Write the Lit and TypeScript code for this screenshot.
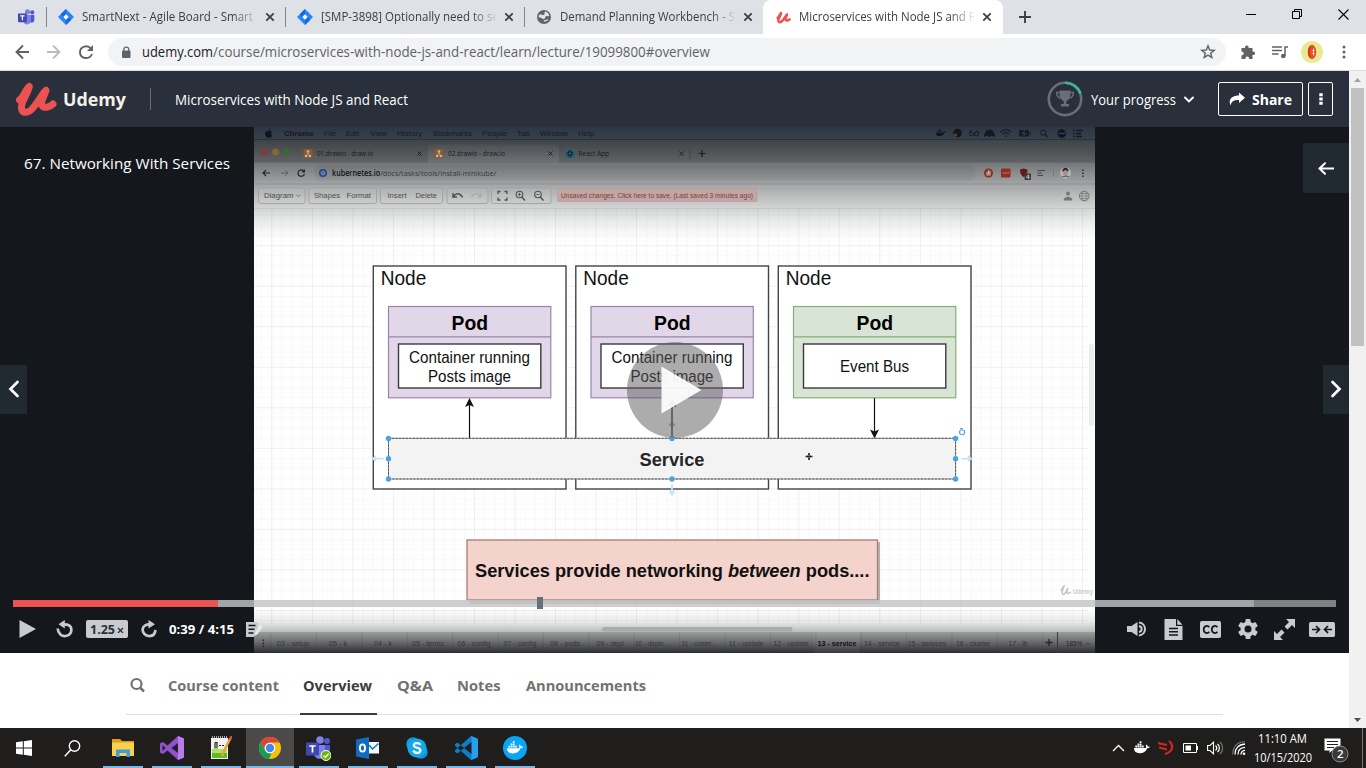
import { LitElement, html, svg, css } from "lit";
import { customElement } from "lit/decorators.js";

type Opt = { size?: number; weight?: number; color?: string; font?: string; opacity?: number };

const UI = "'Open Sans','Noto Sans',sans-serif";
const ARIAL = "'Liberation Sans',Arial,sans-serif";

/* One line of text set to an exact advance width, usable inside flex rows. */
const label = (text: string, width: number, o: Opt = {}, cls = "") => {
  const size = o.size ?? 12;
  return html`<svg class="label ${cls}" width=${width} height=${size * 1.6} viewBox="0 0 ${width} ${size * 1.6}">
    <text x="0" y=${size * 1.16} textLength=${width} lengthAdjust="spacingAndGlyphs" font-family=${o.font ?? UI}
      font-size=${size} font-weight=${o.weight ?? 400} fill=${o.color ?? "#3c4043"}>${text}</text></svg>`;
};

const icon = (w: number, h: number, body: unknown, vb = `0 0 ${w} ${h}`, cls = "") =>
  html`<svg class="ic ${cls}" width=${w} height=${h} viewBox=${vb} fill="none">${body}</svg>`;

/* Text on the video canvas. */
const vt = (x: number, y: number, text: string, w: number, o: Opt = {}) =>
  svg`<text x=${x} y=${y} textLength=${w} lengthAdjust="spacingAndGlyphs" font-family=${o.font ?? ARIAL}
    font-size=${o.size ?? 8} font-weight=${o.weight ?? 400} fill=${o.color ?? "#000"} opacity=${o.opacity ?? 1}>${text}</text>`;

const udemyU = (w: number, h: number) => icon(w, h, svg`
  <path d="M19.500 100C24 97 25.500 89.500 29.300 86.500C28 94 20.500 102 21.500 108.500C22.500 114 28.500 113 32.500 108.500C38.500 102 42.500 93 46 90.300C45 95 40 101.500 42 105.500C44 108.500 49.500 107.500 53 104" stroke="#ec5252" stroke-width="7" stroke-linecap="round" stroke-linejoin="round"/>`, "15 81 42 36");

const jira = icon(16, 16, svg`<path d="M8 0L16 8L8 16L0 8Z" fill="#2684ff"/><path d="M8 0L8 5.400L5.400 8L2.700 5.300Z" fill="#1868db"/><path d="M8 16L8 10.600L10.600 8L13.300 10.700Z" fill="#1868db"/><path d="M8 5.300L10.700 8L8 10.700L5.300 8Z" fill="#fff"/>`);
const globe = icon(16, 16, svg`<circle cx="8" cy="8" r="7" fill="#5f6368"/><path d="M3 6C5 4 6 6.500 7.500 6C9.500 5.400 8 4 9 2.600C11.500 3 13 5 13.300 7C12 8 11 6.500 9.800 7.400C8.500 8.500 9.500 9.500 8 10C6 10.500 5 8 2.400 8.400Z" fill="#dee1e6"/><path d="M8 12.500C9 11 11 12 12 10.500" stroke="#dee1e6" stroke-width="1.300"/>`);
const teams = (s: number, check = false) => icon(s, s, svg`
  <circle cx="21" cy="5" r="3" fill="#5059c9"/><circle cx="14" cy="4" r="3.800" fill="#7b83eb"/>
  <path d="M17 9H24V16C24 20 20 21 17 19Z" fill="#5059c9"/><path d="M8 9H19V17C19 24 9 25 8 18Z" fill="#7b83eb"/>
  <rect x="0" y="6.500" width="13" height="13" rx="1" fill="#4049ae"/><path d="M3.300 10H9.700M6.500 10V16.600" stroke="#fff" stroke-width="1.700"/>
  ${check ? svg`<circle cx="20" cy="19.500" r="5" fill="#6bb700" stroke="#fff" stroke-width="1"/><path d="M17.500 19.500L19.400 21.300L22.600 17.800" stroke="#fff" stroke-width="1.300"/>` : ""}`, "0 0 25 25");
const closeX = icon(10, 10, svg`<path d="M1.300 1.300L8.700 8.700M8.700 1.300L1.300 8.700" stroke="#3c4043" stroke-width="1.800"/>`);
const whale = (s: number, c: string) => svg`<g transform="scale(${s})" fill=${c}><path d="M0 8H13.500C14 6.500 13.700 5.500 13.200 4.800L14 4C15 4.600 15.400 5.400 15.500 6.200C16.400 6 17.300 6.200 18 6.500C17.500 7.800 16.300 8.100 15 8.100C13.600 12 10.500 13.800 6.500 13.800C2 13.800 0 11.500 0 8Z"/><path d="M1.500 5.200H3.500V7.300H1.500ZM4 5.200H6V7.300H4ZM6.500 5.200H8.500V7.300H6.500ZM9 5.200H11V7.300H9ZM4 2.700H6V4.700H4ZM6.500 2.700H8.500V4.700H6.500ZM6.500 .3H8.500V2.300H6.500Z"/></g>`;

const range = (n: number) => Array.from({ length: n }, (_, i) => i);

@customElement("video-frame")
class VideoFrame extends LitElement {
  static styles = css`:host{display:block;width:841px;height:526px}svg{display:block}`;

  grid() {
    const xs = range(82).map((i) => 261.7 + i * 10.133);
    const ys = range(41).map((i) => 215.3 + i * 10.133);
    return svg`${xs.map((x, i) => svg`<path d="M${x} 209V624" stroke="#000" stroke-opacity=${i % 4 === 1 ? 0.06 : 0.022}/>`)}
      ${ys.map((y, i) => svg`<path d="M254 ${y}H1088" stroke="#000" stroke-opacity=${i % 4 === 3 ? 0.06 : 0.022}/>`)}`;
  }

  node(x: number) {
    return svg`<rect x=${x} y="266" width="192.700" height="223" fill="#fff" stroke="#444" stroke-width="1.400"/>
      ${vt(x + 7.5, 284.5, "Node", 45.5, { size: 19.5, color: "#111" })}`;
  }

  pod(x: number, fill: string, edge: string, lines: [string, number][]) {
    return svg`<rect x=${x} y="306.500" width="162.300" height="91.300" fill=${fill} stroke=${edge} stroke-width="1.200"/>
      <path d="M${x} 336.800H${x + 162.3}" stroke=${edge} stroke-width="1.200"/>
      <rect x=${x + 10} y="344" width="142.300" height="44" fill="#fff" stroke="#3a3a3a" stroke-width="1.400"/>
      ${vt(x + 63, 330, "Pod", 36.5, { size: 20, weight: 700 })}
      ${lines.map(([s, w], i) => vt(x + 81 - w / 2, (lines.length > 1 ? 363.3 : 372.3) + i * 18.2, s, w, { size: 15.6, color: "#111" }))}`;
  }

  render() {
    const dot = (x: number, y: number) => svg`<circle cx=${x} cy=${y} r="2.700" fill="#4ba4de"/>`;
    const menu: [string, number, number][] = [["File", 324, 12], ["Edit", 346, 13], ["View", 370, 17], ["History", 397, 25], ["Bookmarks", 433, 39], ["People", 482, 25], ["Tab", 517, 13], ["Window", 540, 28], ["Help", 578, 16]];
    const sheets: [string, number, number][] = [["03 - setup", 293, 32], ["05 - k", 338, 18], ["04 - k", 383, 18], ["05 - terms", 428, 32], ["06 - config", 474, 33], ["07 - config", 520, 33], ["08 - pods", 565, 30], ["09 - depl", 610, 27], ["10 - deplo..", 651, 32], ["11 - comm...", 699, 35], ["11 - update", 746, 35], ["12 - update", 791, 35], ["13 - service", 837, 39], ["14 - service", 882, 36], ["15 - serivces", 927, 38], ["16 - cluster", 973, 34], ["17 - lb", 1018, 19]];
    const purple = ["#e1d7e8", "#9b84ac"], green = ["#d8e5d6", "#86ae72"];
    const btn = (x: number, w: number) => svg`<rect x=${x} y="188" width=${w} height="15.500" rx="2" stroke="#a0a2a3" stroke-width=".9" fill="#fff" fill-opacity=".05"/>`;
    return html`<svg width="841" height="526" viewBox="254 127 841 526" fill="none">
      <defs>
        <linearGradient id="top" x1="0" y1="0" x2="0" y2="1">
          <stop offset="0" stop-color="#2e3642"/><stop offset=".11" stop-color="#37414c"/><stop offset=".111" stop-color="#3f4246"/>
          <stop offset=".31" stop-color="#5f6163"/><stop offset=".32" stop-color="#747779"/><stop offset=".5" stop-color="#a1a3a4"/>
          <stop offset=".7" stop-color="#cfd1d1"/><stop offset=".85" stop-color="#eceeed"/><stop offset="1" stop-color="#fefefe"/>
        </linearGradient>
        <linearGradient id="bot" x1="0" y1="0" x2="0" y2="1">
          <stop offset="0" stop-color="#fefefe"/><stop offset=".3" stop-color="#e6e7e7"/><stop offset=".52" stop-color="#bbbdbd"/>
          <stop offset=".53" stop-color="#999b9c"/><stop offset=".75" stop-color="#696b6e"/><stop offset="1" stop-color="#2d2d31"/>
        </linearGradient>
        <linearGradient id="act" x1="0" y1="0" x2="0" y2="1"><stop offset="0" stop-color="#4c4f53"/><stop offset="1" stop-color="#707376"/></linearGradient>
      </defs>
      <rect x="254" y="127" width="841" height="526" fill="#fefefe"/>
      <rect x="254" y="127" width="841" height="113" fill="url(#top)"/>
      <rect x="254" y="609" width="841" height="44" fill="url(#bot)"/>
      ${this.grid()}
      <rect x="254" y="139" width="841" height="1" fill="#24313f"/>
      <path d="M266 136.500C264 134 265.500 130.500 268 131.500C270 130.500 272 131.500 272 132C270.500 133 270.800 134.500 272.300 135.300C271.300 138 270 138 268.800 137.500C267.500 138 266.800 137.700 266 136.500ZM268.500 131C268.500 129.500 269.500 128.700 270.500 128.600C270.500 130 269.700 130.900 268.500 131Z" fill="#10151b"/>
      ${vt(284, 136, "Chrome", 29.5, { size: 8, weight: 700, color: "#12171e" })}
      ${menu.map(([s, x, w]) => vt(x, 136, s, w, { size: 8, color: "#151b23" }))}
      <g transform="translate(936 128.500)">${whale(0.55, "#12171d")}</g>
      <circle cx="957.500" cy="133" r="4.300" fill="#14171b"/><circle cx="955.500" cy="135" r="1.500" fill="#7c3a30"/>
      <circle cx="971.500" cy="134" r="2" stroke="#171c22"/><circle cx="976.500" cy="134" r="2" stroke="#171c22"/><path d="M969.500 133L971 130M978.500 133L977 130" stroke="#171c22"/>
      <path d="M984 137C984 127 995 127 995 137L991.500 135.500L989.500 137L987.500 135.500Z" fill="#14191f"/>
      <path d="M1000.500 132C1004 129 1008 129 1011 132M1002.500 134C1004.500 132.300 1007 132.300 1009 134" stroke="#171c22" stroke-width="1.200"/><circle cx="1005.800" cy="136" r="1" fill="#171c22"/>
      <rect x="1019" y="130" width="10" height="6.500" rx="1" fill="#171c22"/><rect x="1029.500" y="132" width="1.500" height="2.500" fill="#171c22"/><path d="M1024.500 130.500L1022.500 133.500H1025.500L1023.500 136" stroke="#414a55" stroke-width=".8"/>
      <circle cx="1043" cy="132.500" r="2.600" stroke="#171c22"/><path d="M1045 134.500L1047.500 137" stroke="#171c22" stroke-width="1.200"/>
      <circle cx="1061.700" cy="133.500" r="4.300" fill="#10151e"/><path d="M1058.500 134C1061 131 1062 136 1065 132.500" stroke="#3c5f8d"/>
      <path d="M1073 130.500H1074.500M1076 130.500H1083M1073 133.500H1074.500M1076 133.500H1081M1073 136.500H1074.500M1076 136.500H1082" stroke="#13181e" stroke-width="1.300"/>
      <path d="M428 163V148C428 145 430 144.500 432 144.500H555C558 144.500 559 146 559 148V163Z" fill="url(#act)"/>
      <circle cx="264.500" cy="152" r="3.500" fill="#803b36"/><circle cx="275.500" cy="152" r="3.500" fill="#85682f"/><circle cx="286.500" cy="152" r="3.500" fill="#346b35"/>
      ${[303.5, 434.5].map((x) => svg`<rect x=${x} y="149" width="9" height="9" rx="1" fill="#8f5a2b"/><path d="M${x + 4.5} 150.500V153L${x + 2.5} 156.500M${x + 4.500} 153L${x + 6.500} 156.500" stroke="#b3a89b" stroke-width=".8"/><path d="M${x + 3.300} 151.500H${x + 5.700}M${x + 1.500} 156H${x + 3.700}M${x + 5.300} 156H${x + 7.500}" stroke="#c4bbb0" stroke-width="1.800"/>`)}
      <rect x="565.500" y="149" width="9" height="9" rx="1" fill="#2b6478"/><ellipse cx="570" cy="153.500" rx="3.700" ry="1.500" stroke="#162029"/><ellipse cx="570" cy="153.500" rx="1.500" ry="3.700" stroke="#162029"/>
      ${vt(317, 156, "01.drawio - draw.io", 56, { size: 7.3, color: "#191a1d", font: UI })}
      ${vt(448, 156, "02.drawio - draw.io", 57, { size: 7.3, color: "#191a1d", font: UI })}
      ${vt(578.5, 156, "React App", 30.5, { size: 7.3, color: "#191a1d", font: UI })}
      ${[419.5, 550.5, 681.5].map((x) => svg`<path d="M${x - 2} 151.500L${x + 2} 155.500M${x + 2} 151.500L${x - 2} 155.500" stroke="#1b1c1e"/>`)}
      <path d="M690 148.500V159" stroke="#3e4144" stroke-width=".8"/><path d="M698.500 153.500H705.500M702 150V157" stroke="#1b1c1e" stroke-width="1.200"/>
      <rect x="314" y="165.500" width="662" height="15" rx="7.500" fill="#000" fill-opacity=".05"/>
      <path d="M270 173H263M266 170L263 173L266 176M304 171C302 169 298 170 298 173C298 177 303.500 177.500 304.500 174" stroke="#222427" stroke-width="1.100"/><path d="M305 169V172.500H301.500Z" fill="#222427"/>
      <path d="M281 173H288M285 170L288 173L285 176" stroke="#5b5e60"/>
      <circle cx="323" cy="173" r="3.200" stroke="#24498f" stroke-width="1.700"/><path d="M323 170V176M320 173H326" stroke="#4b69a0" stroke-width=".7"/>
      <text x="332" y="176" textLength="164.500" lengthAdjust="spacingAndGlyphs" font-family=${UI} font-size="8" fill="#37393c"><tspan font-weight="600" fill="#111214">kubernetes.io</tspan>/docs/tasks/tools/install-minikube/</text>
      <circle cx="988.500" cy="173" r="4.500" fill="#8c2b20"/><path d="M987 172V175H990V171M988.500 170V174" stroke="#b9b9b9" stroke-width="1.200"/>
      <rect x="1001" y="168.500" width="9.500" height="9" rx="1" fill="#932c25"/><path d="M1003 173H1009" stroke="#c4a09c" stroke-width="1.200" stroke-dasharray="1.400 .8"/>
      <path d="M1020 169.500L1023.500 168.500L1027.500 169.500C1027.500 173 1026.500 175.500 1023.700 177C1021 175.500 1020 173 1020 169.500Z" fill="#651719"/><rect x="1024.500" y="173.500" width="6.500" height="6.500" rx="1" fill="#393c3f"/>
      ${vt(1026, 179, "4", 3.5, { size: 6, color: "#ccc", weight: 700 })}
      <path d="M1037.500 170.500H1045M1037.500 173H1042M1037.500 175.500H1043" stroke="#444649" stroke-width="1.100"/>
      <path d="M1053.500 169V177" stroke="#727577" stroke-width=".8"/>
      <circle cx="1065.500" cy="173" r="5.500" fill="#b2b5b7"/><path d="M1062.300 171.500C1062 166.500 1069 166.500 1068.500 171.500" fill="#2c2625"/><ellipse cx="1065.500" cy="173" rx="2.200" ry="3" fill="#a58e85"/><path d="M1061.800 177C1063.500 176 1067.500 176 1069.200 177" stroke="#4b4b50" stroke-width="1"/>
      <path d="M1083 169.500V177" stroke="#26282a" stroke-width="1.400" stroke-dasharray="1.500 1.500"/>
      <path d="M254 184H1095" stroke="#8c8e90" stroke-width=".8"/><path d="M254 208.500H1095" stroke="#bfc1c1" stroke-width=".8"/>
      ${btn(258.5, 46.5)}${btn(309, 67.500)}${btn(380.5, 62)}${btn(447, 41)}${btn(491.500, 59.500)}
      ${vt(264, 198.300, "Diagram", 29.5, { size: 7.8, color: "#4b4d4f" })}<path d="M296 194.500L298.200 196.700L300.400 194.500" stroke="#66696a" stroke-width=".8"/>
      ${vt(314, 198.300, "Shapes", 26, { size: 7.8, color: "#4b4d4f" })}${vt(346.500, 198.300, "Format", 24.5, { size: 7.8, color: "#4b4d4f" })}
      ${vt(387.500, 198.300, "Insert", 19, { size: 7.8, color: "#4b4d4f" })}${vt(415.500, 198.300, "Delete", 21.5, { size: 7.8, color: "#4b4d4f" })}
      <path d="M453 193V197H457M453.500 196.500C456 192.500 460.500 193 462.500 197.500" stroke="#505254" stroke-width="1.500"/>
      <path d="M481 193V197H477M480.500 196.500C478 192.500 473.500 193 471.500 197.500" stroke="#a5a8a8" stroke-width="1.100"/>
      <path d="M500.500 191.500H498V194M504.500 191.500H507V194M498 197.500V200H500.500M507 197.500V200H504.500" stroke="#4f5153" stroke-width="1.300"/>
      ${[519.5, 538].map((x, i) => svg`<circle cx=${x} cy="194.500" r="3.300" stroke="#505254" stroke-width="1.100"/><path d="M${x + 2.3} 197L${x + 5.500} 200.500" stroke="#505254" stroke-width="1.500"/><path d="M${x - 1.700} 194.500H${x + 1.700}" stroke="#505254" stroke-width=".8"/>${i ? "" : svg`<path d="M${x} 192.800V196.200" stroke="#505254" stroke-width=".8"/>`}`)}
      <rect x="557.500" y="189" width="199.500" height="12.500" rx="1" fill="#c3a5a4" stroke="#b89e9d" stroke-width=".8"/>
      ${vt(561, 197.800, "Unsaved changes. Click here to save. (Last saved 3 minutes ago)", 192, { size: 7, color: "#7c403f" })}
      <circle cx="1068" cy="193.500" r="2" fill="#757778"/><path d="M1063.500 200.500C1063.500 195.500 1072.500 195.500 1072.500 200.500Z" fill="#757778"/>
      <circle cx="1084.200" cy="196" r="4.800" stroke="#77797a"/><ellipse cx="1084.200" cy="196" rx="2.200" ry="4.800" stroke="#77797a" stroke-width=".8"/><path d="M1079.400 196H1089M1080 193.500H1088.400M1080 198.500H1088.400" stroke="#77797a" stroke-width=".7"/>
      <rect x="1089" y="344" width="5" height="82" rx="2" fill="#ededed"/>
      ${[373.3, 575.8, 778.3].map((x) => this.node(x))}
      ${this.pod(388.5, purple[0], purple[1], [["Container running", 121], ["Posts image", 83]])}
      ${this.pod(591, purple[0], purple[1], [["Container running", 121], ["Posts image", 83]])}
      ${this.pod(793.5, green[0], green[1], [["Event Bus", 69]])}
      ${[469.5, 672].map((x) => svg`<path d="M${x} 438V402" stroke="#111" stroke-width="1.200"/><path d="M${x} 398L${x + 4.500} 407L${x} 405L${x - 4.500} 407Z" fill="#111"/>`)}
      <path d="M874.500 398V434" stroke="#111" stroke-width="1.200"/><path d="M874.500 438.500L879 429.500L874.500 431.500L870 429.500Z" fill="#111"/>
      <path d="M388.500 438.300H955.600V479H388.500Z" fill="#f3f3f3" stroke="#8a8a8a"/><path d="M388.500 438.300H955.600V479H388.500Z" stroke="#444" stroke-dasharray="2 1.500" stroke-width=".8"/>
      ${vt(639.5, 465.700, "Service", 65, { size: 18.4, weight: 700, color: "#262626" })}
      <path d="M384 458.600H373M376 456L373 458.600L376 461M961 458.600H971M968 456L971 458.600L968 461M672 484V494M669.500 491L672 494.500L674.500 491" stroke="#c8e3f5" stroke-width="1.800"/>
      <path d="M672 433V423M669.500 426L672 422L674.500 426" stroke="#4f7c98" stroke-width="1.800" opacity=".6"/>
      ${dot(388.500, 438.500)}${dot(388.500, 458.700)}${dot(388.500, 479)}${dot(672, 438.500)}${dot(672, 479)}${dot(955.600, 438.500)}${dot(955.600, 458.700)}${dot(955.600, 479)}
      <path d="M960.800 429.900A2.600 2.600 0 1 0 963.400 429.900" stroke="#4ba4de" stroke-width="1.200"/><path d="M959.600 428H962.600V431.200Z" fill="#4ba4de"/>
      <path d="M805.500 456.500H812.500M809 453V460" stroke="#fff" stroke-width="3.500"/><path d="M805.500 456.500H812.500M809 453V460" stroke="#222" stroke-width="1.700"/><circle cx="809" cy="456.500" r="1.700" fill="#fff" stroke="#333" stroke-width=".7"/><path d="M807 456.500H811M809 454.500V458.500" stroke="#222" stroke-width=".9"/>
      <rect x="469" y="542" width="411" height="62" fill="#000" fill-opacity=".28"/>
      <rect x="467" y="540" width="410.500" height="60" fill="#f4d3cd" stroke="#a67c73" stroke-width="1.300"/>
      <text x="475" y="577" textLength="394.500" lengthAdjust="spacingAndGlyphs" font-family=${ARIAL} font-size="18.300" font-weight="700" fill="#111">Services provide networking <tspan font-style="italic">between</tspan> pods....</text>
      <circle cx="675" cy="390" r="48" fill="#5c5c5c" fill-opacity=".51"/><path d="M661.500 366.500L701.500 390L661.500 413.500Z" fill="#fff" fill-opacity=".93"/>
      <path d="M1060.500 590.500C1062.500 589 1063 586.500 1064 586C1062.500 590 1061 593 1063 594.500C1065.500 594.500 1067.500 589 1068 588C1066 593 1067 595 1071 592" stroke="#c4c4c4" stroke-width="1.500"/>
      ${vt(1073, 594, "Udemy", 20, { size: 6.500, weight: 700, color: "#cacaca" })}
      <rect x="602" y="627" width="190.500" height="4.500" rx="2.200" fill="#a9abac"/>
      <path d="M263.300 639.500V648" stroke="#26272a" stroke-width="1.600" stroke-dasharray="1.600 1.500"/>
      <rect x="814" y="632" width="45.500" height="21" fill="#fff" fill-opacity=".05"/>
      ${range(18).map((i) => svg`<path d="M${271 + i * 45.4} 633V651" stroke="#333" stroke-opacity=".2" stroke-width=".8"/>`)}
      ${sheets.map(([s, x, w]) => vt(x - w / 2, 646.3, s, w, { size: 7.3, weight: s.startsWith("13") ? 700 : 400, color: s.startsWith("13") ? "#121214" : "#34363a" }))}
      <path d="M1045.500 642.500H1052.500M1049 639V646" stroke="#242528" stroke-width="1.300"/><path d="M1057.500 632V653" stroke="#3a3b3d"/>
      ${vt(1066, 646, "185%", 16, { size: 7.200, color: "#232427" })}<path d="M1086 645L1088 643L1090 645" stroke="#303235" stroke-width=".8"/>
    </svg>`;
  }
}

@customElement("app-root")
class AppRoot extends LitElement {
  static styles = css`
    :host{display:block;width:1366px;height:768px;overflow:hidden;background:#fff;font-family:'Open Sans','Noto Sans',sans-serif}
    *{box-sizing:border-box}
    svg{display:block;flex:none}
    .label{overflow:visible}
    .row{display:flex;align-items:center}
    .strip{height:34px;background:#dee1e6}
    .pinned{width:46px;padding-left:18px}
    .tab{width:239px;height:34px;padding:0 0 0 11px;gap:8px}
    .tab .sep{width:1px;height:20px;background:#80868b;margin:0 0 0 -11px}
    .tab .sep+*{margin-left:3px}
    .tab.on{background:#fff;border-radius:8px 8px 0 0;width:240px;padding-left:13px}
    .fade{mask-image:linear-gradient(90deg,#000 86%,transparent 101%)}
    .clip{width:175px;overflow:hidden}
    .plus{margin-left:16px}
    .win{margin-left:auto;gap:36px;padding:0 17px 6px 0}
    .tools{height:37px;background:#fff;border-bottom:1px solid #d9dce0;padding-left:15px}
    .omni{width:1118px;height:28px;margin-left:14px;border-radius:14px;background:#f1f3f4;padding:0 10px 0 12px}
    .url{gap:0;margin-left:10px}
    .star{margin-left:auto}
    .tools .ext{margin-left:14px;gap:16px}
    .avatar{margin:0 3px 0 -3px}
    .page{display:flex;height:657px}
    .main{width:1349px}
    .bar{width:17px;background:#f1f1f1;display:flex;flex-direction:column;align-items:center;padding:7px 0 6px}
    .thumb{width:13px;height:258px;background:#c1c1c1;margin-top:6px}
    .bar .down{margin-top:auto}
    .head{height:56px;background:#29303b;padding:0 16px 0 15px}
    .head .label{margin-top:2px}
    .head .brand{margin-left:6px}
    .rule{width:1px;height:22px;background:#686f7a;margin:0 24px 0 24px}
    .prog{margin-left:auto;gap:8px}
    .share{width:85px;height:34px;border:1px solid #fff;border-radius:2px;margin-left:24px;padding-left:10px;gap:7px}
    .more{width:25px;height:34px;border:1px solid #fff;border-radius:2px;margin-left:5px;justify-content:center}
    .player{display:grid;height:526px;background:#14171c;overflow:hidden}
    .player>*{grid-area:1/1}
    video-frame{margin-left:254px}
    .over{display:flex;flex-direction:column;z-index:1}
    .ptop{height:66px;padding:16px 0 0 24px;justify-content:space-between;align-items:flex-start}
    .ptitle{margin-top:9px}
    .exp{width:46px;height:50px;background:#222a31;justify-content:center}
    .nav{margin-top:172px;justify-content:space-between}
    .nav div{width:27px;height:49px;background:#222a31;display:flex;align-items:center;justify-content:center;padding-bottom:1px}
    .nav div+div{width:26px}
    .track{display:flex;position:relative;margin:186px 0 0 13px;width:1323px;height:7px}
    .t1{width:205px;background:#ec5252}.t2{width:1036px;background:rgba(194,196,199,.82)}.t3{width:82px;background:#808183}
    .mark{position:absolute;left:524px;top:-3px;width:6px;height:12px;background:#686f7a}
    .ctl{height:45px;padding:0 14px 1px 18px}
    .speed{width:42px;height:18px;border-radius:2px;background:#cacbcf;padding-left:4px;margin:0 13px 0 12px;gap:2px}
    .time{margin:0 12px 0 12px}
    .rep{margin-left:20px}
    .right{margin-left:auto;display:grid;grid-template-columns:37px 37px 37px 37px 37px 32px;justify-items:center;align-items:center}
    .right :last-child{justify-self:end}
    .tabs{width:1097px;margin-left:126px;height:62px;border-bottom:1px solid #dedfcf}
    .mag{margin:3px 0 0 3px}
    .ct{display:flex;height:62px;padding-top:21px;margin-left:24px}
    .ct.first{margin-left:23px}
    .ct.ov{border-bottom:2px solid #3c3b37;margin-left:21px;padding-left:3px;width:77px;margin-bottom:-1px}
    .ct.qa{margin-left:20px}
    .ct.an{margin-left:25px}
    .task{height:40px;background:#1f1e1d}
    .tk{width:49px;height:40px;display:flex;flex-direction:column;align-items:center}
    .tk .cell{height:38px;width:48px;display:flex;align-items:center;justify-content:center;padding-top:2px}
    .tk.first{width:48px}
    .gap{width:2px}
    .tk.on .cell{background:#4c4a49}
    .tk i{height:2px;width:40px;background:#76b9ed}
    .tk.on i{width:48px}
    .tray{margin-left:auto;gap:8.7px;height:40px}
    .clock{display:flex;flex-direction:column;align-items:center;width:58px;margin-left:-1.5px}
    .note{margin:3px 0 0 4px}
    .peek{width:1px;height:40px;background:#777;margin:0 3px 0 4px}
  `;

  tab(ic: unknown, text: string, w: number, on = false) {
    return html`<div class="tab row ${on ? "on" : ""}">${on ? "" : html`<span class="sep"></span>`}${ic}
      <div class="clip"><div class="fade">${label(text, w, { size: 12.300 })}</div></div>${closeX}</div>`;
  }

  task(ic: unknown, cls = "", open = true) {
    return html`<div class="tk ${cls}"><div class="cell">${ic}</div>${open ? html`<i></i>` : ""}</div>`;
  }

  render() {
    const g = "#cacbcf";
    const W = { color: "#fff" };
    return html`
    <div class="strip row">
      <div class="pinned">${teams(17)}</div>
      ${this.tab(jira, "SmartNext - Agile Board - Smart", 171)}
      ${this.tab(jira, "[SMP-3898] Optionally need to se", 178)}
      ${this.tab(globe, "Demand Planning Workbench - S", 175)}
      ${this.tab(udemyU(15, 13), "Microservices with Node JS and R", 177, true)}
      ${icon(12, 12, svg`<path d="M0 6H12M6 0V12" stroke="#3c4043" stroke-width="1.900"/>`, undefined, "plus")}
      <div class="win row">
        ${icon(10, 10, svg`<path d="M0 5.500H10" stroke="#000"/>`)}
        ${icon(10, 10, svg`<path d="M.5 2.500H7.500V9.500H.5ZM2.500 2.500V.5H9.500V7.500H7.500" stroke="#000"/>`)}
        ${icon(11, 11, svg`<path d="M.5 .5L10.500 10.500M10.500 .5L.5 10.500" stroke="#000" stroke-width="1.100"/>`)}
      </div>
    </div>
    <div class="tools row">
      ${icon(79, 16, svg`<path d="M14 8H1.500M8 1.500L1.500 8L8 14.500" stroke="#5f6368" stroke-width="1.900"/>
        <path d="M32 8H44.500M38 1.500L44.500 8L38 14.500" stroke="#babcbe" stroke-width="1.900"/>
        <path d="M76.200 5C72.800 .4 65 2 65 8.200C65 14.800 74.500 16.300 77 10" stroke="#5f6368" stroke-width="1.900"/><path d="M78 1V7H72Z" fill="#5f6368"/>`)}
      <div class="omni row">
        ${icon(12, 12, svg`<rect x="2" y="4.500" width="8.500" height="7.500" rx="1" fill="#5f6368"/><path d="M3.800 5V3.300C3.800 .5 8.700 .5 8.700 3.300V5" stroke="#5f6368" stroke-width="1.300"/>`)}
        <div class="url row">${label("udemy.com", 71, { size: 14, color: "#202124" })}${label("/course/microservices-with-node-js-and-react/learn/lecture/19099800#overview", 497, { size: 14, color: "#5f6368" })}</div>
        ${icon(16, 16, svg`<path d="M8 1.800L9.700 6L14.200 6.300L10.700 9.200L11.800 13.600L8 11.200L4.200 13.600L5.300 9.200L1.800 6.300L6.300 6Z" stroke="#5f6368" stroke-width="1.400"/>`, undefined, "star")}
      </div>
      <div class="ext row">
        ${icon(16, 16, svg`<path d="M1.500 4H5C4.300 1 9 .3 8.700 4H12.500V7.500C16 7 16 11.500 12.500 11V15H9C9.500 11.800 5 11.800 5.500 15H1.500V11.300C4.500 11.500 4.500 7.300 1.500 7.800Z" fill="#5f6368"/>`)}
        ${icon(16, 14, svg`<path d="M0 2H10M0 5.500H10M0 9H6.500M16 2H13V11" stroke="#5f6368" stroke-width="1.500"/><circle cx="11.300" cy="11" r="2.300" fill="#5f6368"/>`)}
        ${icon(22, 22, svg`<circle cx="11" cy="11" r="11" fill="#e6eb91"/><ellipse cx="11" cy="11" rx="4.300" ry="7.200" fill="#ed4b2b"/><path d="M9 5.500C7.500 8.500 7.500 13.500 9 16.500" stroke="#c42c1d" stroke-width="1.400"/><path d="M12.500 7.500V14.500M11.500 9.500H13.500M11.500 12.500H13.500" stroke="#fff" stroke-width=".8"/>`, undefined, "avatar")}
        ${icon(4, 14, svg`<circle cx="2" cy="2" r="1.500" fill="#5f6368"/><circle cx="2" cy="7" r="1.500" fill="#5f6368"/><circle cx="2" cy="12" r="1.500" fill="#5f6368"/>`)}
      </div>
    </div>
    <div class="page">
      <div class="main">
        <div class="head row">
          ${udemyU(42, 36)}
          ${label("Udemy", 63, { size: 18.500, weight: 700, color: "#f4f1ea" }, "brand")}
          <span class="rule"></span>
          ${label("Microservices with Node JS and React", 233, { size: 14, weight: 500, ...W })}
          <div class="prog row">
            ${icon(36, 36, svg`<circle cx="18" cy="18" r="16.200" stroke="#686f7a" stroke-width="2.600"/><path d="M18 1.800A16.200 16.200 0 0 1 33.500 12.500" stroke="#3fb58b" stroke-width="2.600"/>
              <path d="M12.500 9.500H23.500V13C23.500 17 21 19.500 19.300 20V23H22V25.500H14V23H16.700V20C15 19.500 12.500 17 12.500 13Z" fill="#686f7a"/><path d="M12.500 11.500H9.700C9.500 14.500 11 17 14 17M23.500 11.500H26.300C26.500 14.500 25 17 22 17" stroke="#686f7a" stroke-width="1.500"/>`)}
            ${label("Your progress", 85, { size: 14, weight: 500, ...W })}
            ${icon(10, 7, svg`<path d="M1 1.500L5 5.500L9 1.500" stroke="#fff" stroke-width="1.900" stroke-linecap="round"/>`)}
          </div>
          <div class="share row">
            ${icon(16, 14, svg`<path d="M10 .5L16 5.800L10 11V8C5 7.800 2.500 9 1.500 13.500C-1 7 3 3.500 10 3.500Z" fill="#fff"/>`)}
            ${label("Share", 40, { size: 14.500, weight: 700, ...W })}
          </div>
          <div class="more row">${icon(4, 12, svg`<path d="M.3 .3H3.700V3.300H.3ZM.3 4.500H3.700V7.500H.3ZM.3 8.700H3.700V11.700H.3Z" fill="#fff"/>`)}</div>
        </div>
        <div class="player">
          <video-frame></video-frame>
          <div class="over">
            <div class="ptop row">
              <div class="ptitle">${label("67. Networking With Services", 206, { size: 15, weight: 400, ...W })}</div>
              <div class="exp row">${icon(16, 13, svg`<path d="M15.500 6.500H2M7 1.300L1.500 6.500L7 11.700" stroke="#fff" stroke-width="2" stroke-linecap="round"/>`)}</div>
            </div>
            <div class="nav row">
              <div>${icon(12, 18, svg`<path d="M9.500 2L2.500 9L9.500 16" stroke="#fff" stroke-width="2.700" stroke-linecap="round"/>`)}</div>
              <div>${icon(12, 18, svg`<path d="M2.500 2L9.500 9L2.500 16" stroke="#fff" stroke-width="2.700" stroke-linecap="round"/>`)}</div>
            </div>
            <div class="track"><div class="t1"></div><div class="t2"></div><div class="t3"></div><div class="mark"></div></div>
            <div class="ctl row">
              ${icon(18, 18, svg`<path d="M1.500 0L18 9L1.500 18Z" fill=${g}/>`)}
              ${icon(18, 18, svg`<path d="M1.700 8.500C2 14 6 16.300 9.500 16C13 15.700 16 13 15.300 8.500C14.800 6 12 4.300 8 4.300" stroke=${g} stroke-width="2.700"/><path d="M8.800 0V8.500L2.500 4.300Z" fill=${g}/>`, undefined, "rep")}
              <div class="speed row">${label("1.25", 25, { size: 12.500, weight: 700, color: "#29303b" })}${icon(7, 7, svg`<path d="M1 1L6 6M6 1L1 6" stroke="#29303b" stroke-width="1.300"/>`, "0 -1 7 7")}</div>
              ${icon(16, 18, svg`<path d="M14.500 10C14 14.500 11 16.300 7.500 16C4 15.700 1.300 12.500 1.700 9C2 6 5 4.300 8.500 4.300" stroke=${g} stroke-width="2.700"/><path d="M7.500 0V8.500L14 4.300Z" fill=${g}/>`)}
              <div class="time">${label("0:39 / 4:15", 65, { size: 12.500, weight: 700, ...W })}</div>
              ${icon(17, 15, svg`<path d="M0 0H11L12.500 2L8 15H0Z" fill=${g}/><path d="M2.500 3.500H9.500M2.500 7.200H8.500M2.500 11H7.500" stroke="#14171c" stroke-width="1.500"/><path d="M9 11L13.500 2.500L17 5L11.500 12L8.500 14Z" fill="#e9eaeb"/>`)}
              <div class="right">
                ${icon(20, 18, svg`<path d="M0 6H4.500L10.500 2V16L4.500 12H0Z" fill=${g}/><path d="M12 2.500C20 3.500 20 14.500 12 15.500M12 6C15.500 6.500 15.500 11.500 12 12" stroke=${g} stroke-width="2"/>`)}
                ${icon(19, 21, svg`<path d="M.5 0H12V7H18.500V21H.5Z" fill=${g}/><path d="M13.300 0L18.500 5.700H13.300Z" fill=${g}/><path d="M5 9.500H14M5 12.700H14M5 15.900H14" stroke="#14171c" stroke-width="1.500"/>`)}
                ${icon(21, 17, svg`<rect width="21" height="17" rx="1.800" fill=${g}/><path d="M9.300 6.300C7.700 3.900 3.700 4.800 3.700 8.500C3.700 12.200 7.700 13 9.300 10.700M17.400 6.300C15.800 3.900 11.800 4.800 11.800 8.500C11.800 12.200 15.800 13 17.400 10.700" stroke="#14171c" stroke-width="1.700"/>`)}
                ${icon(20, 20, svg`<circle cx="10" cy="10" r="5.500" stroke=${g} stroke-width="4"/>${range(6).map((i) => svg`<rect x="7.500" y="0" width="5" height="4" rx="1" transform="rotate(${i * 60} 10 10)" fill=${g}/>`)}`)}
                ${icon(21, 21, svg`<path d="M12 0H21V9L18 6L13.500 10.500L10.500 7.500L15 3ZM9 21H0V12L3 15L7.500 10.500L10.500 13.500L6 18Z" fill=${g}/><path d="M8.500 8.500L12.500 12.500" stroke="#14171c" stroke-width="1.200"/>`)}
                ${icon(26, 15, svg`<rect width="26" height="15" rx="1.800" fill=${g}/><path d="M3 7.500H10M7 4L10.500 7.500L7 11M23 7.500H16M19 4L15.500 7.500L19 11" stroke="#14171c" stroke-width="1.700"/>`)}
              </div>
            </div>
          </div>
        </div>
        <div class="tabs row">
          ${icon(16, 16, svg`<circle cx="7.500" cy="7" r="5" stroke="#73726c" stroke-width="2.200"/><path d="M11 10.500L15 14.500" stroke="#73726c" stroke-width="2.500"/>`, undefined, "mag")}
          <div class="ct first">${label("Course content", 111, { size: 15, weight: 700, color: "#73726c" })}</div>
          <div class="ct ov">${label("Overview", 69, { size: 15, weight: 700, color: "#3c3b37" })}</div>
          <div class="ct qa">${label("Q&A", 36, { size: 15, weight: 700, color: "#73726c" })}</div>
          <div class="ct">${label("Notes", 43.500, { size: 15, weight: 700, color: "#73726c" })}</div>
          <div class="ct an">${label("Announcements", 120, { size: 15, weight: 700, color: "#73726c" })}</div>
        </div>
      </div>
      <div class="bar">
        ${icon(7, 4, svg`<path d="M3.500 0L7 4H0Z" fill="#a3a3a3"/>`)}
        <div class="thumb"></div>
        ${icon(7, 4, svg`<path d="M0 0H7L3.500 4Z" fill="#505050"/>`, undefined, "down")}
      </div>
    </div>
    <div class="task row">
      ${this.task(icon(16, 16, svg`<path d="M0 2.300L6.800 1.300V7.500H0ZM7.800 1.200L16 0V7.500H7.800ZM0 8.500H6.800V14.700L0 13.700ZM7.800 8.500H16V16L7.800 14.800Z" fill="#fff"/>`), "first", false)}
      ${this.task(icon(17, 17, svg`<circle cx="10.500" cy="6" r="5.200" stroke="#fff" stroke-width="1.400"/><path d="M6.800 9.800L.8 16.200" stroke="#fff" stroke-width="1.500"/>`), "first", false)}
      <div class="gap"></div>
      ${this.task(icon(22, 19, svg`<path d="M0 0H8L10 2H22V5H0Z" fill="#dd9f16"/><path d="M0 3.500H22V17H0Z" fill="#fbd14b"/><path d="M4 18V10.500H18V18H14.500V14H7.500V18Z" fill="#3f9be0"/>`))}
      ${this.task(icon(24, 24, svg`<path d="M18 0L24 2.500V21.500L18 24L7.500 14.500L3 18L0 16.500V7.500L3 6L7.500 9.500Z" fill="#8e52c9"/><path d="M18 7L11.500 12L18 17ZM2.500 9V15L5.500 12Z" fill="#251e2b"/><path d="M18 0L24 2.500V21.500L18 24Z" fill="#b97bea"/>`))}
      ${this.task(icon(22, 24, svg`<rect x="1" y="2" width="17" height="21" fill="#f2f2f0"/><rect x="2" y="14" width="15" height="8" fill="#5fb92a"/><rect x="2" y="13" width="15" height="4" fill="#b0e457"/><path d="M2 1H17" stroke="#aaa" stroke-width="2" stroke-dasharray="1 1"/><path d="M5 6.500V12.500M5 6.500H7V12.500M9 9.500H11M12 9.500H14" stroke="#222" stroke-width="1.200"/><path d="M20.500 2L13 17L12 20" stroke="#e8a33a" stroke-width="2.500"/><path d="M21.700 0L20 3.500" stroke="#d64b4b" stroke-width="2.500"/>`))}
      ${this.task(icon(22, 22, svg`<circle cx="11" cy="11" r="11" fill="#f4c20d"/><path d="M1.500 5.500A11 11 0 0 1 20.500 5.500H11A5.500 5.500 0 0 0 6.200 13.700Z" fill="#db4437"/><path d="M1.500 5.500L6.200 13.700A5.500 5.500 0 0 0 12.500 16.300L10 22A11 11 0 0 1 1.500 5.500Z" fill="#0f9d58"/><circle cx="11" cy="11" r="5.300" fill="#fff"/><circle cx="11" cy="11" r="4.200" fill="#4285f4"/>`), "on")}
      ${this.task(teams(25, true))}
      ${this.task(icon(23, 22, svg`<path d="M12 5H23V16.500H12Z" fill="#f4f8fb"/><path d="M13 8L16.500 12L22.500 6.500" stroke="#1278c8" stroke-width="1.500"/><path d="M0 2.500L13 0V22L0 19.500Z" fill="#0f6cbf"/><ellipse cx="6.500" cy="11" rx="2.600" ry="3.600" stroke="#fff" stroke-width="1.900"/>`))}
      ${this.task(icon(22, 22, svg`<circle cx="7" cy="7" r="6.800" fill="#1797dc"/><circle cx="15" cy="15" r="6.800" fill="#1490df"/><circle cx="11" cy="11" r="9.500" fill="#13a9ea"/><path d="M14.500 7.800C13 5.200 7.500 5.500 7.800 8.500C8 11.500 14.500 10 14.500 13.300C14.300 17 8.500 16.500 7.300 13.500" stroke="#fff" stroke-width="2.200"/>`))}
      ${this.task(icon(24, 24, svg`<path d="M18 5.500L3.500 17.500L1 15.800V14.200L17 0H18ZM18 18.500L3.500 6.500L1 8.200V9.800L17 24H18Z" fill="#0c7dc9"/><path d="M17.500 0L24 2.800V21.200L17.500 24Z" fill="#26a0ec"/>`))}
      ${this.task(icon(24, 24, svg`<circle cx="12" cy="12" r="12" fill="#08a6f4"/><g transform="translate(4 5)">${whale(0.9, "#fff")}</g>`))}
      <div class="tray row">
        ${icon(13, 8, svg`<path d="M1 7L6.500 1.500L12 7" stroke="#fff" stroke-width="1.300"/>`)}
        ${icon(16, 14, whale(0.88, "#fff"))}
        ${icon(16, 16, svg`<path d="M0 3L9 5M1 7.500L9 9.500M11 1C16 5 15 12 7 14" stroke="#d9231e" stroke-width="2.200"/>`)}
        ${icon(15, 10, svg`<path d="M.5 .5H13.500V9.500H.5Z" stroke="#fff"/><path d="M2.500 2.500H8V7.500H2.500Z" fill="#fff"/><path d="M14.500 3V7" stroke="#fff"/>`)}
        ${icon(17, 14, svg`<path d="M.6 4.500H3L6.500 1.200V12.800L3 9.500H.6Z" stroke="#fff" stroke-width="1.100"/><path d="M8.500 4.500C10 6 10 8 8.500 9.500M10.500 3C13 5 13 9 10.500 11" stroke="#fff" stroke-width="1.200"/><path d="M13 1C16.500 4 16.500 10 13 13" stroke="#777" stroke-width="1.200"/>`)}
        ${icon(14, 14, svg`<path d="M3 13.500C3 7 7 3.500 13 3M6 13.500C6 9 9 6.500 13 6.300M9 13.500C9 11 11 9.500 13 9.300" stroke="#fff" stroke-width="1.300"/><path d="M.7 13.500C.7 5 6 .8 13 .8" stroke="#777" stroke-width="1.100"/><circle cx="12" cy="12.700" r="1.300" fill="#fff"/>`)}
        <div class="clock">${label("11:10 AM", 49, { size: 11.800, ...W })}${label("10/15/2020", 58, { size: 11.800, ...W })}</div>
        ${icon(25, 26, svg`<path d="M.5 1.500H16.500V13.500H8L5.500 16V13.500H.5Z" fill="#fff"/><path d="M3 4.500H14M3 7.500H14M3 10.500H10" stroke="#222" stroke-width="1.200"/><circle cx="16" cy="17" r="8" fill="#3a3a3a" stroke="#8b8b8b"/><text x="12.900" y="21.200" font-size="11.500" font-weight="600" font-family=${UI} fill="#fff">2</text>`, undefined, "note")}
        <span class="peek"></span>
      </div>
    </div>`;
  }
}
